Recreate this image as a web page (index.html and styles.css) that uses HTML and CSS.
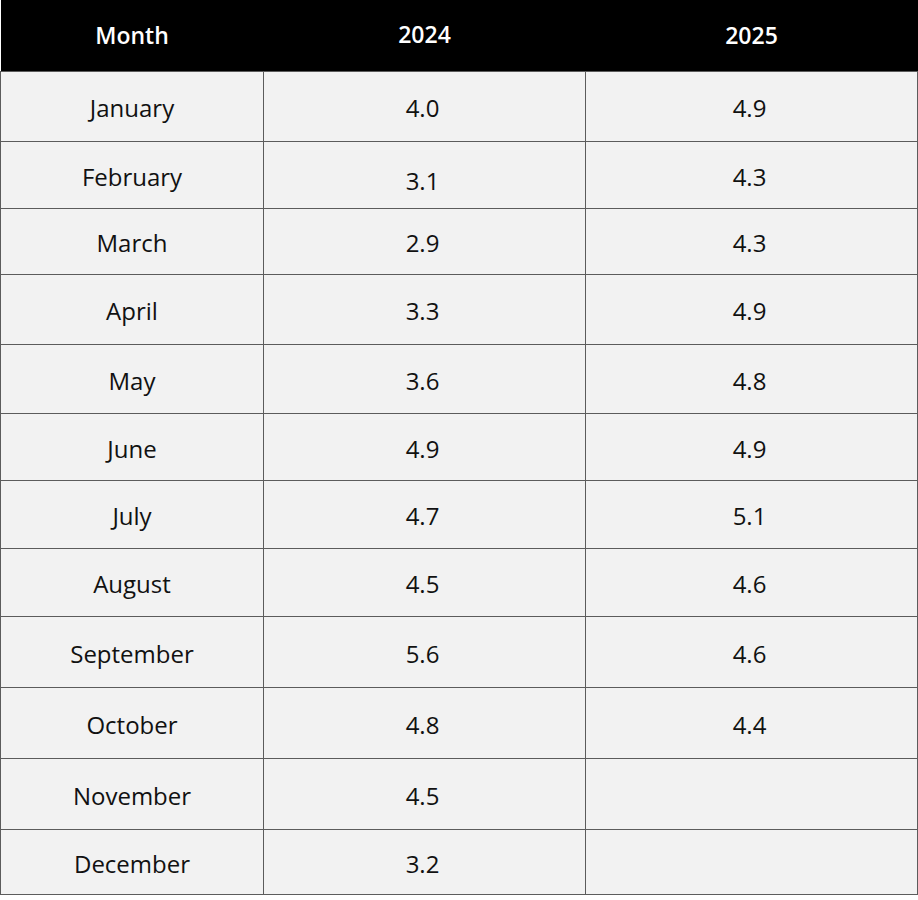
FILE: index.html
```html
<!DOCTYPE html>
<html lang="en">
<head>
<meta charset="utf-8">
<title>Monthly values</title>
<link rel="stylesheet" href="styles.css">
</head>
<body>
<table class="data">
  <colgroup>
    <col class="c1"><col class="c2"><col class="c3">
  </colgroup>
  <thead>
    <tr class="h"><th>Month</th><th>2024</th><th>2025</th></tr>
  </thead>
  <tbody>
    <tr class="r70"><td>January</td><td>4.0</td><td>4.9</td></tr>
    <tr class="r67"><td>February</td><td class="lo">3.1</td><td>4.3</td></tr>
    <tr class="r66"><td>March</td><td>2.9</td><td>4.3</td></tr>
    <tr class="r70"><td>April</td><td>3.3</td><td>4.9</td></tr>
    <tr class="r69"><td>May</td><td>3.6</td><td>4.8</td></tr>
    <tr class="r67"><td>June</td><td>4.9</td><td>4.9</td></tr>
    <tr class="r68"><td>July</td><td>4.7</td><td>5.1</td></tr>
    <tr class="r68"><td>August</td><td>4.5</td><td>4.6</td></tr>
    <tr class="r71"><td>September</td><td>5.6</td><td>4.6</td></tr>
    <tr class="r71"><td>October</td><td>4.8</td><td>4.4</td></tr>
    <tr class="r71"><td>November</td><td>4.5</td><td></td></tr>
    <tr class="r65"><td>December</td><td>3.2</td><td></td></tr>
  </tbody>
</table>
</body>
</html>
```
FILE: styles.css
```css
html, body {
  margin: 0;
  padding: 0;
  background: #ffffff;
}
body {
  font-family: "Open Sans", Lato, sans-serif;
  color: #111;
}
.data {
  border-collapse: collapse;
  width: 917px;
  table-layout: fixed;
}
.c1 { width: 263px; }
.c2 { width: 322px; }
.c3 { width: 332px; }
.data th {
  background: #000;
  color: #fff;
  font-weight: 600;
  font-size: 23px;
  line-height: 1;
  height: 71px;
  box-sizing: border-box;
  padding: 1px 0 0 0;
  text-align: center;
  vertical-align: middle;
}
.data th:nth-child(2) { padding-bottom: 1px; padding-top: 0; }
.data td {
  background: #f2f2f2;
  border: 1px solid #5c5c5c;
  font-size: 24px;
  line-height: 1;
  text-align: center;
  vertical-align: middle;
  padding: 4px 0 0 0;
  box-sizing: border-box;
}
.data td:nth-child(2) { padding-right: 4px; }
.data td:nth-child(3) { padding-right: 4px; }
.data td.lo { padding-top: 13px; }
.r65 td { height: 65px; }
.r66 td { height: 66px; }
.r67 td { height: 67px; }
.r68 td { height: 68px; }
.r69 td { height: 69px; }
.r70 td { height: 70px; }
.r71 td { height: 71px; }
```
